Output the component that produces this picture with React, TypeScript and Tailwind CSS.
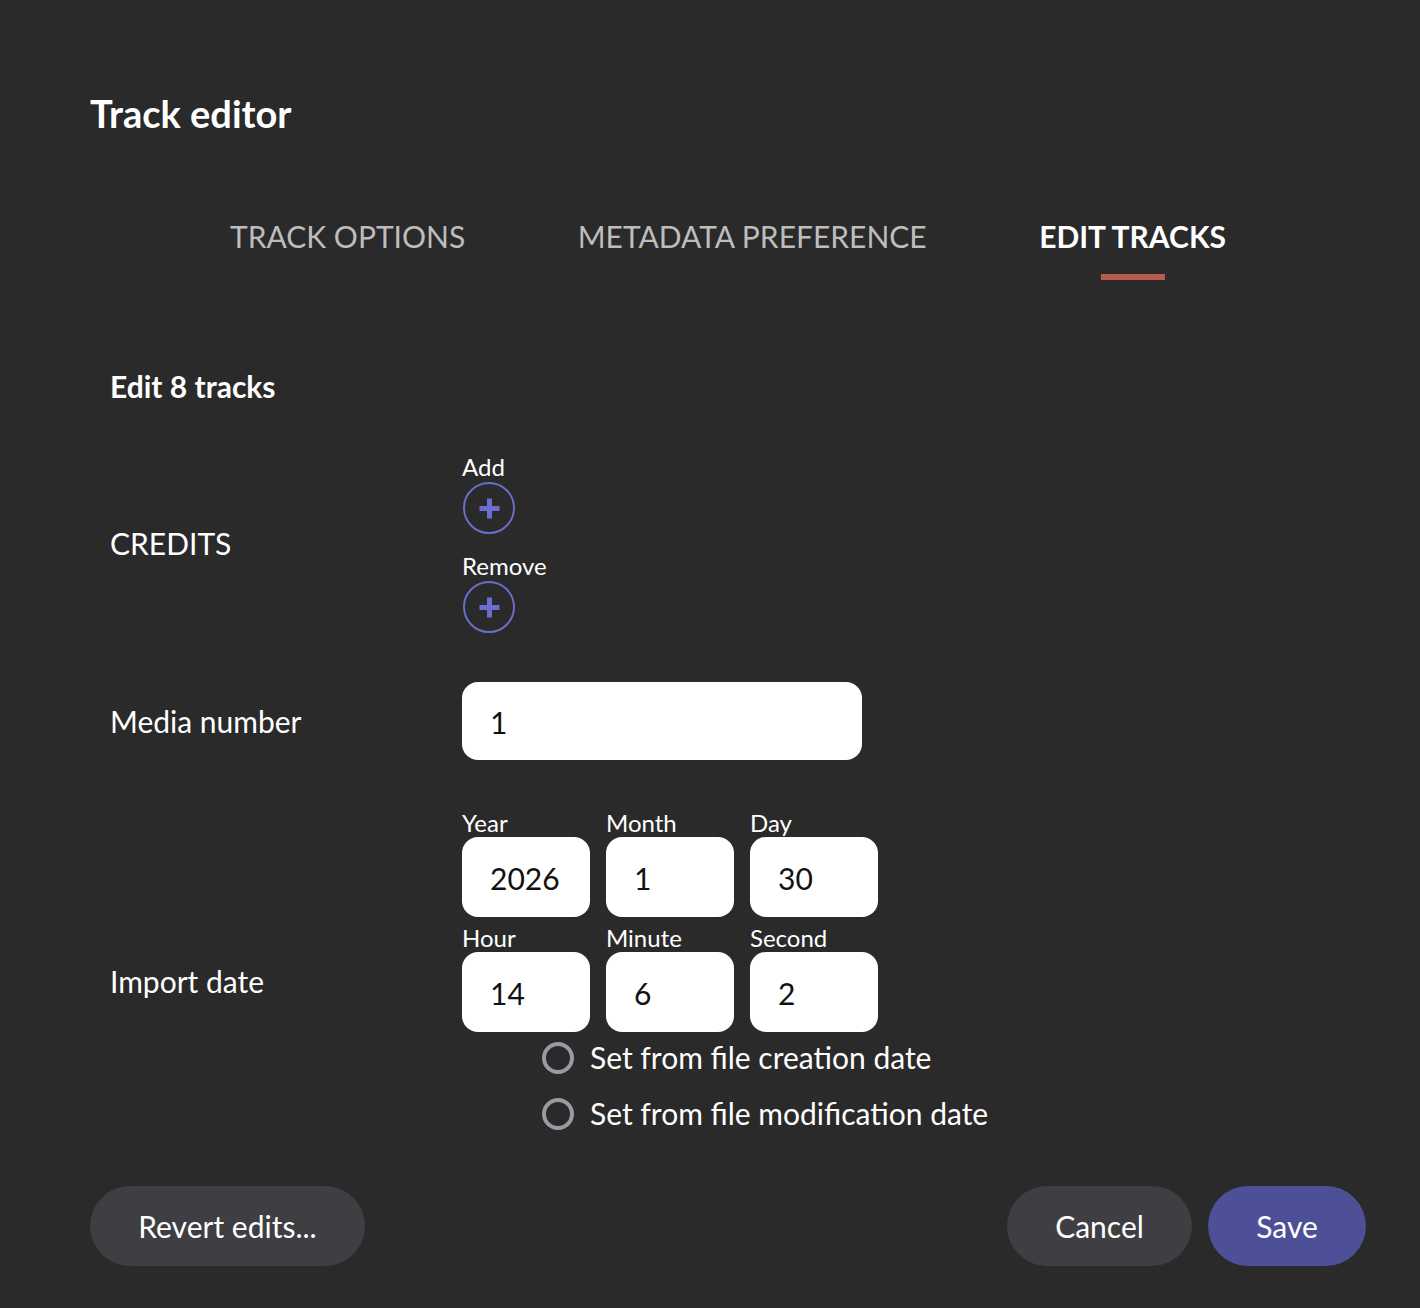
const lato = "font-['Lato',sans-serif]";

function PlusButton() {
  return (
    <button className="ml-px flex h-[52px] w-[52px] items-center justify-center rounded-full border-2 border-[#6a6ec8]">
      <svg width="21" height="21" viewBox="0 0 21 21">
        <path d="M10.5 0.5v20M0.5 10.5h20" stroke="#6a6ed0" strokeWidth="5" />
      </svg>
    </button>
  );
}

function NumberField({ label, value }: { label: string; value: string }) {
  return (
    <div className="w-32">
      <div className="h-[25px] text-[24px] leading-[21px] text-white">{label}</div>
      <div className="flex h-20 items-center rounded-2xl bg-white pl-7 pt-0.5 text-[30px] text-[#111]">{value}</div>
    </div>
  );
}

function Radio({ label }: { label: string }) {
  return (
    <div className="flex h-14 items-center">
      <span className="mt-0.5 h-8 w-8 rounded-full border-[4px] border-[#9a9aa2]" />
      <span className="ml-4 text-[30px] text-white">{label}</span>
    </div>
  );
}

export default function App() {
  return (
    <div className={`${lato} flex h-[1308px] w-[1420px] flex-col bg-[#2a2a2a] pl-[90px] pr-[54px] text-white`}>
      <h1 className="mt-[88px] text-[38px] font-bold leading-[50px]">Track editor</h1>

      <nav className="mt-[73px] flex gap-[112.5px] pl-[140px] text-[30px] leading-[50px] text-[#bdbdbd]">
        <div>TRACK OPTIONS</div>
        <div>METADATA PREFERENCE</div>
        <div className="flex flex-col items-center font-bold text-white">
          EDIT TRACKS
          <span className="mt-[13px] h-[6px] w-16 bg-[#b85c50]" />
        </div>
      </nav>

      <div className="pl-5">
        <h2 className="mt-[86px] text-[30px] font-bold leading-[40px]">Edit 8 tracks</h2>

        <div className="mt-[46px] flex items-center">
          <div className="mt-0.5 w-[352px] text-[30px]">CREDITS</div>
          <div className="flex flex-col gap-[17px] text-[24px] leading-[30px]">
            <div>
              Add
              <PlusButton />
            </div>
            <div>
              Remove
              <PlusButton />
            </div>
          </div>
        </div>

        <div className="mt-[49px] flex items-center">
          <div className="w-[352px] text-[30px]">Media number</div>
          <div className="flex h-[78px] w-[400px] items-center rounded-2xl bg-white pl-7 pt-0.5 text-[30px] text-[#111]">1</div>
        </div>

        <div className="mt-[52px] flex items-center">
          <div className="mt-[9px] w-[352px] text-[30px]">Import date</div>
          <div>
            <div className="flex gap-4">
              <NumberField label="Year" value="2026" />
              <NumberField label="Month" value="1" />
              <NumberField label="Day" value="30" />
            </div>
            <div className="mt-2.5 flex gap-4">
              <NumberField label="Hour" value="14" />
              <NumberField label="Minute" value="6" />
              <NumberField label="Second" value="2" />
            </div>
            <div className="-mt-[3px] pl-[80px]">
              <Radio label="Set from file creation date" />
              <Radio label="Set from file modification date" />
            </div>
          </div>
        </div>
      </div>

      <div className="mt-[45px] flex justify-between text-[30px]">
        <button className="h-20 w-[275px] rounded-full bg-[#3f3f43]">Revert edits...</button>
        <div className="flex gap-4">
          <button className="h-20 w-[185px] rounded-full bg-[#3f3f43]">Cancel</button>
          <button className="h-20 w-[158px] rounded-full bg-[#4d5096]">Save</button>
        </div>
      </div>
    </div>
  );
}
